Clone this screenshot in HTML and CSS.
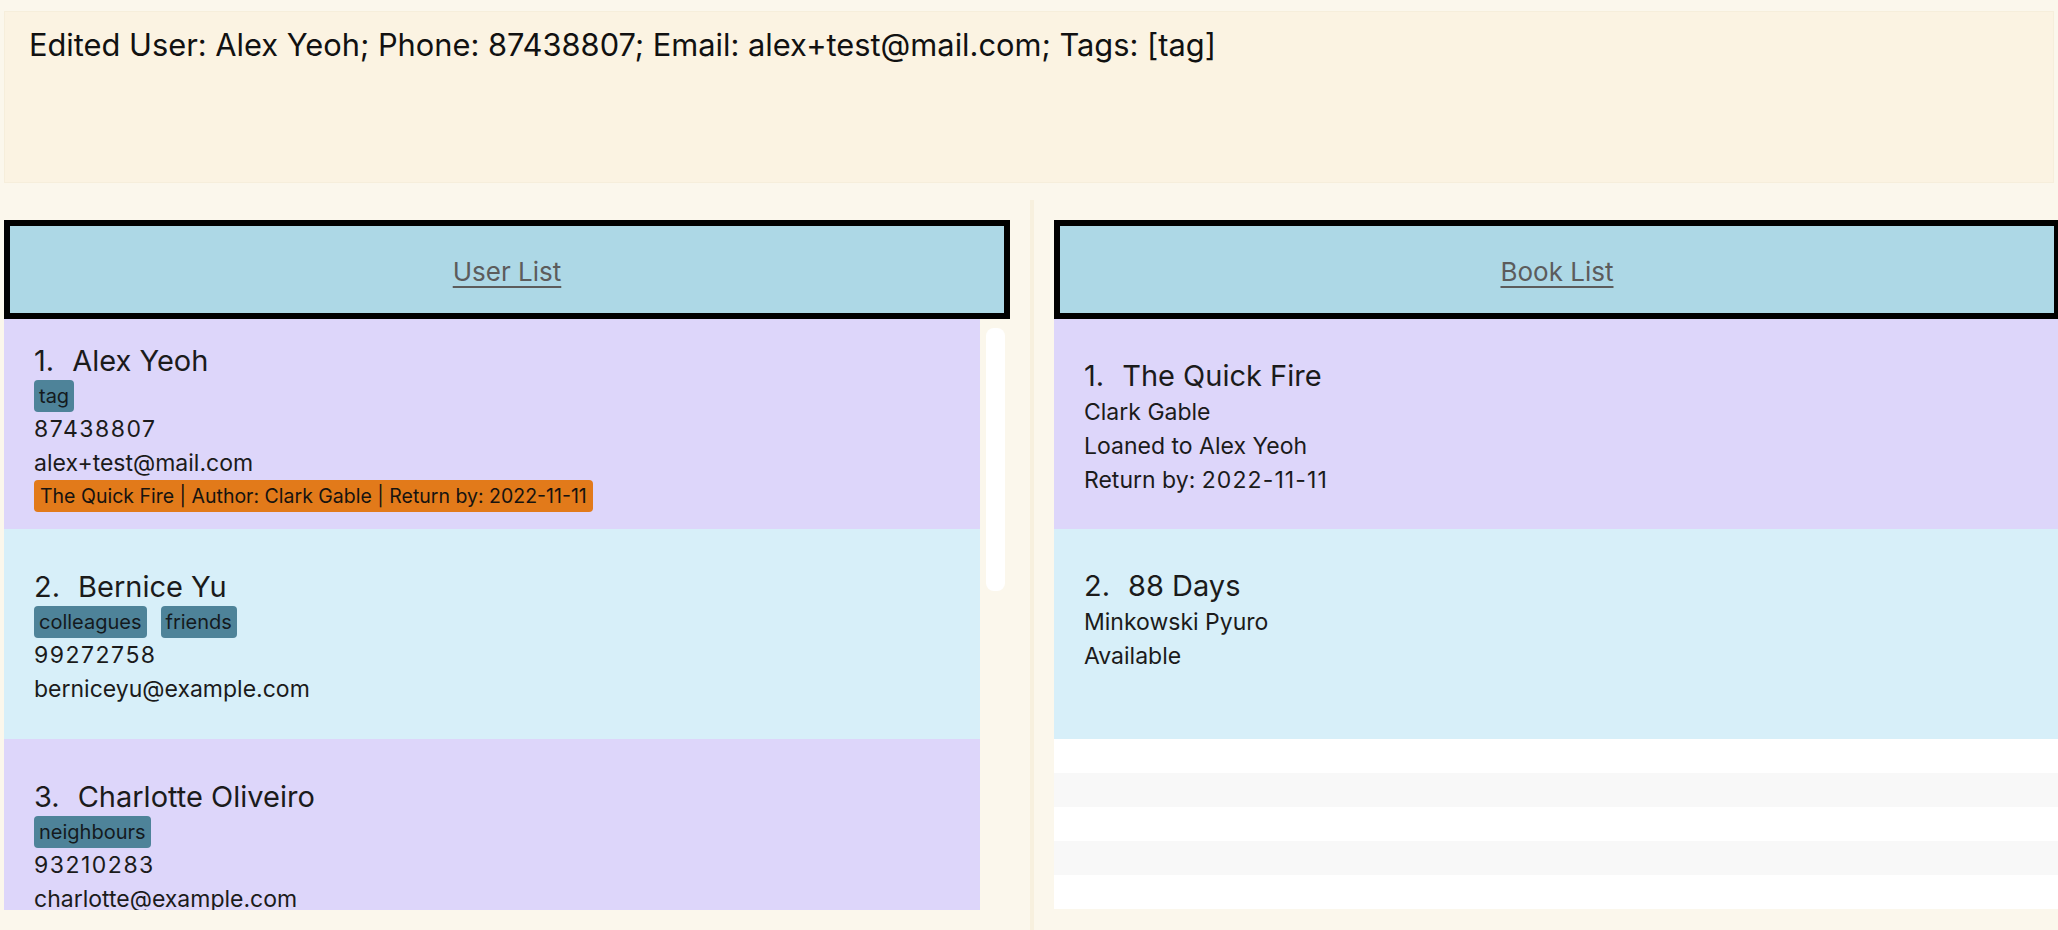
FILE: index.html
```html
<!DOCTYPE html>
<html>
<head>
<meta charset="utf-8">
<link rel="stylesheet" href="styles.css">
</head>
<body>
<div class="result">Edited User: Alex Yeoh; Phone: 87438807; Email: alex+test@mail.com; Tags: [tag]</div>
<div class="split">
  <div class="pane pane-left">
    <div class="panel-head"><span class="head-title">User List</span></div>
    <div class="list-wrap">
      <div class="list">
        <div class="cell cell-purple user-cell">
          <div class="name"><span class="idx">1.</span><span>Alex Yeoh</span></div>
          <div class="tags"><span class="tag">tag</span></div>
          <div class="line num">87438807</div>
          <div class="line">alex+test@mail.com</div>
          <div class="tags"><span class="loan">The Quick Fire | Author: Clark Gable | Return by: 2022-11-11</span></div>
        </div>
        <div class="cell cell-blue user-cell">
          <div class="name"><span class="idx">2.</span><span>Bernice Yu</span></div>
          <div class="tags"><span class="tag">colleagues</span><span class="tag">friends</span></div>
          <div class="line num">99272758</div>
          <div class="line">berniceyu@example.com</div>
        </div>
        <div class="cell cell-purple user-cell">
          <div class="name"><span class="idx">3.</span><span>Charlotte Oliveiro</span></div>
          <div class="tags"><span class="tag">neighbours</span></div>
          <div class="line num">93210283</div>
          <div class="line">charlotte@example.com</div>
        </div>
      </div>
      <div class="scroll-track"><div class="scroll-thumb"></div></div>
    </div>
  </div>
  <div class="divider"></div>
  <div class="pane pane-right">
    <div class="panel-head"><span class="head-title">Book List</span></div>
    <div class="list-wrap">
      <div class="list">
        <div class="cell cell-purple book-cell">
          <div class="name"><span class="idx">1.</span><span>The Quick Fire</span></div>
          <div class="line">Clark Gable</div>
          <div class="line">Loaned to Alex Yeoh</div>
          <div class="line">Return by: <span class="date">2022-11-11</span></div>
        </div>
        <div class="cell cell-blue book-cell">
          <div class="name"><span class="idx">2.</span><span>88 Days</span></div>
          <div class="line">Minkowski Pyuro</div>
          <div class="line">Available</div>
        </div>
        <div class="empty-row"></div>
        <div class="empty-row empty-odd"></div>
        <div class="empty-row"></div>
        <div class="empty-row empty-odd"></div>
        <div class="empty-row"></div>
      </div>
    </div>
  </div>
</div>
</body>
</html>
```

FILE: styles.css
```css
* { box-sizing: border-box; }
html, body {
  margin: 0;
  padding: 0;
}
body {
  width: 2058px;
  height: 930px;
  overflow: hidden;
  background: #fbf7ec;
  font-family: "Inter", "Noto Sans", sans-serif;
  color: #1b1b1b;
}
.result {
  margin: 11px 4px 0 4px;
  height: 172px;
  background: #fbf3e2;
  border: 1px solid #f6eedb;
  padding: 15px 24px;
  font-size: 30.8px;
  line-height: 36px;
  color: #111;
}
.split {
  display: flex;
  margin-top: 17px;
  height: 730px;
}
.pane {
  display: flex;
  flex-direction: column;
  padding-top: 20px;
  padding-bottom: 20px;
}
.pane-left {
  width: 1030px;
  padding-left: 4px;
  padding-right: 20px;
}
.divider {
  width: 4px;
  background: #f7f0de;
}
.pane-right {
  flex: 1;
  padding-left: 20px;
  margin-right: -2px;
}
.panel-head {
  height: 99px;
  border: 6px solid #000;
  background: #add8e6;
  display: flex;
  align-items: center;
  justify-content: center;
  padding-top: 3px;
}
.head-title {
  font-size: 26px;
  color: #5c5c5c;
  text-decoration: underline;
  text-decoration-thickness: 2px;
  text-underline-offset: 5px;
}
.list-wrap {
  height: 591px;
  display: flex;
  overflow: hidden;
}
.list {
  flex: 1;
  display: flex;
  flex-direction: column;
}
.cell {
  height: 210px;
  flex: none;
  padding-left: 30px;
  display: flex;
  flex-direction: column;
}
.user-cell {
  justify-content: center;
  padding-top: 6px;
}
.book-cell {
  justify-content: flex-start;
  padding-top: 38px;
}
.cell-purple { background: #ddd6fa; }
.cell-blue { background: #d7eff9; }
.name {
  font-size: 29px;
  line-height: 38px;
  display: flex;
}
.idx {
  margin-right: 18px;
}
.line {
  font-size: 23px;
  line-height: 34px;
}
.num {
  letter-spacing: 1.5px;
}
.date {
  letter-spacing: 1.1px;
}
.tags {
  display: flex;
  gap: 14px;
}
.tag {
  height: 32px;
  line-height: 32px;
  padding: 0 5px;
  font-size: 20px;
  background: #4e8399;
  color: #141a1e;
  border-radius: 4px;
}
.loan {
  height: 32px;
  line-height: 32px;
  padding: 0 6px;
  font-size: 19.5px;
  background: #e27a1a;
  color: #161310;
  border-radius: 4px;
}
.scroll-track {
  width: 30px;
  padding: 9px 5px 0 6px;
}
.scroll-thumb {
  height: 263px;
  background: #ffffff;
  border-radius: 8px;
}
.empty-row {
  height: 34px;
  flex: none;
  background: #ffffff;
}
.empty-odd {
  background: #f8f8f8;
}
```
